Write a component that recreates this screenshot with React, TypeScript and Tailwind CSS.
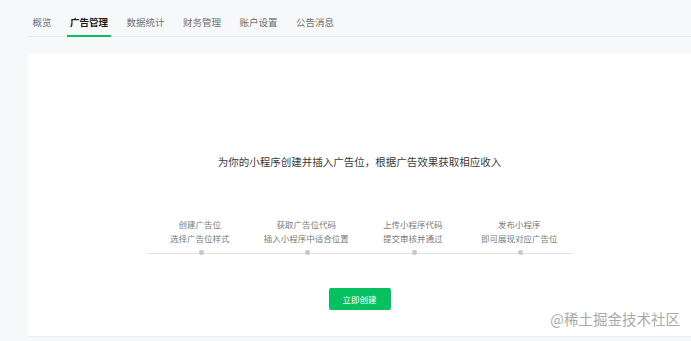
const tabs = ['概览', '广告管理', '数据统计', '财务管理', '账户设置', '公告消息'];

const steps = [
  ['创建广告位', '选择广告位样式'],
  ['获取广告位代码', '插入小程序中适合位置'],
  ['上传小程序代码', '提交审核并通过'],
  ['发布小程序', '即可展现对应广告位'],
];

export default function App() {
  return (
    <div
      className="relative flex h-[341px] w-[691px] flex-col overflow-hidden bg-[#f7f8fa] pl-[28px]"
      style={{ fontFamily: '"Noto Sans CJK SC", "Noto Sans", sans-serif' }}
    >
      <div className="flex h-[37px] shrink-0 items-stretch gap-[12.5px] border-b border-[#e6e7ea] pl-[1.5px]">
        {tabs.map((t, i) => (
          <div
            key={t}
            className={
              i === 1
                ? 'flex items-center border-b-2 border-[#07c160] px-[3px] pt-[9px] text-[9.5px] font-bold text-[#1a1a1a] -mb-px'
                : 'flex items-center border-b-2 border-transparent px-[3px] pt-[9px] text-[9.5px] text-[#707070] -mb-px'
            }
          >
            {t}
          </div>
        ))}
      </div>

      <div className="mt-[17px] flex h-[283px] flex-col items-center border-b border-[#ececec] bg-white pt-[101px]">
        <div className="text-[10.5px] leading-[14px] text-[#3a3a3a]">
          为你的小程序创建并插入广告位，根据广告效果获取相应收入
        </div>

        <div className="mt-[48px] flex w-[426px] flex-col">
          <div className="grid grid-cols-4">
            {steps.map(([a, b]) => (
              <div key={a} className="flex flex-col items-center text-[8.5px] leading-[14px] text-[#7a7a7a]">
                <span>{a}</span>
                <span>{b}</span>
              </div>
            ))}
          </div>
          <div className="relative mt-[5px] grid h-[5px] grid-cols-4">
            <div className="absolute left-0 right-0 top-[3px] h-px bg-[#e2e2e2]" />
            {steps.map(([a]) => (
              <div key={a} className="relative flex justify-center">
                <div className="ml-[3px] h-[5px] w-[5px] rounded-full bg-[#c9c9c9]" />
              </div>
            ))}
          </div>
        </div>

        <button className="mt-[33px] flex h-[22px] w-[62px] items-center justify-center rounded-[2px] bg-[#07c160] text-[8.5px] text-white">
          立即创建
        </button>
      </div>

      <div className="absolute bottom-[13px] right-[11px] text-[14.5px] leading-[18px] text-[#a9a9a9]">
        @稀土掘金技术社区
      </div>
    </div>
  );
}
